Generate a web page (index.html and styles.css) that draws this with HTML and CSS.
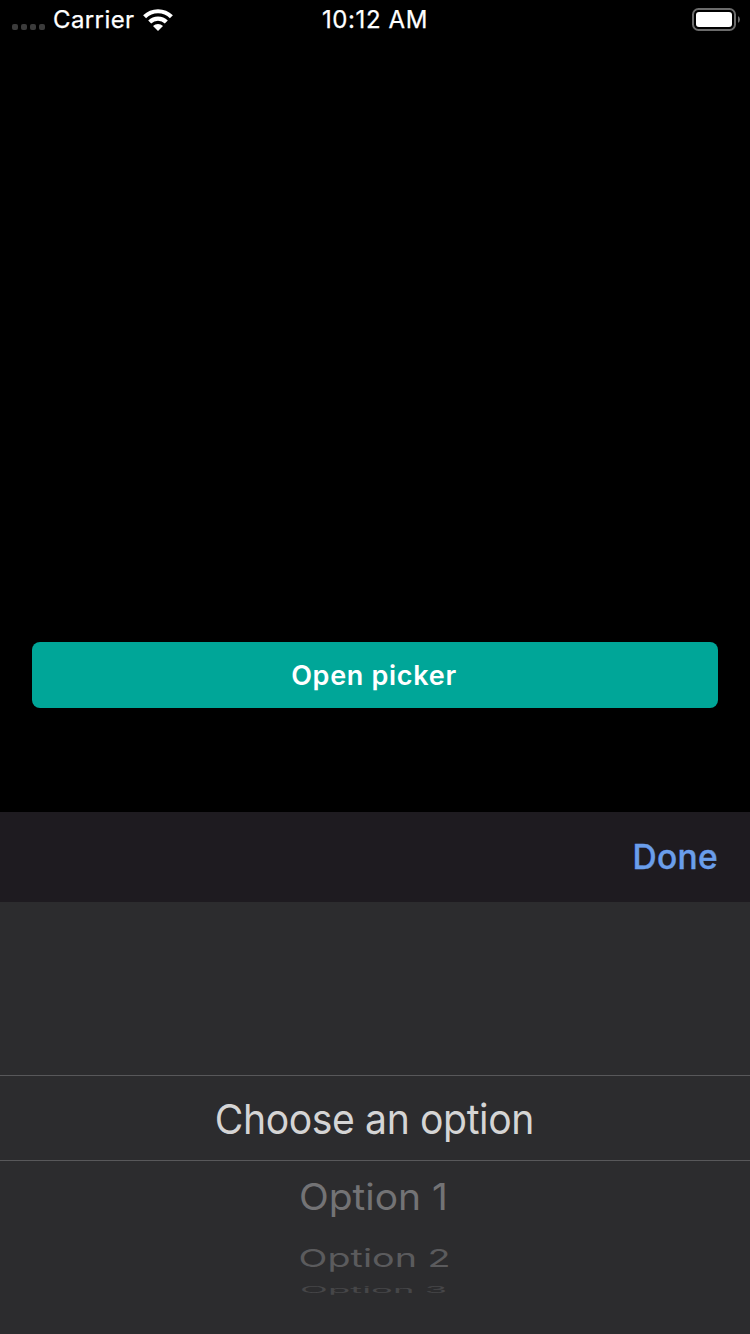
FILE: index.html
```html
<!DOCTYPE html>
<html lang="en">
<head>
<meta charset="utf-8">
<title>Picker</title>
<link rel="stylesheet" href="styles.css">
</head>
<body>
<div class="screen">
  <header class="status">
    <div class="status-left">
      <div class="signal"><i></i><i></i><i></i><i></i></div>
      <span class="carrier">Carrier</span>
      <svg class="wifi" width="30" height="22" viewBox="0 0 30 22">
        <path fill="none" stroke="#fff" stroke-width="4.2" d="M1.6 7.8A19 19 0 0 1 28.4 7.8M6.7 13A11.7 11.7 0 0 1 23.3 13"/>
        <path fill="#fff" d="M10 17.1A7.2 7.2 0 0 1 20 17.1L15 22Z"/>
      </svg>
    </div>
    <span class="time">10:12 AM</span>
    <div class="status-right">
      <svg width="48" height="24" viewBox="0 0 48 24">
        <rect x="1" y="1" width="42" height="21" rx="5.5" fill="none" stroke="#6b6b6b" stroke-width="2"/>
        <rect x="4" y="4" width="36" height="15" rx="3" fill="#fff"/>
        <path d="M46 8Q48 9.3 48 11.5T46 15Z" fill="#6b6b6b"/>
      </svg>
    </div>
  </header>
  <main class="content"><button class="open"><span>Open picker</span></button></main>
  <div class="toolbar"><span class="done">Done</span></div>
  <section class="wheel">
    <div class="selected"><span class="choose">Choose an option</span></div>
    <div class="row row-1"><span>Option 1</span></div>
    <div class="row row-2"><span>Option 2</span></div>
    <div class="row row-3"><span>Option 3</span></div>
  </section>
</div>
</body>
</html>
```
FILE: styles.css
```css
* { box-sizing: border-box; }
body { margin: 0; background: #000; font-family: Inter, "Liberation Sans", sans-serif; color: #fff; }
.screen { width: 750px; height: 1334px; display: flex; flex-direction: column; overflow: hidden; }
.status { height: 40px; display: grid; grid-template-columns: 1fr auto 1fr; font-size: 24px; line-height: 40px; font-weight: 400; }
.status-left { display: flex; padding-left: 12px; }
.signal { display: flex; gap: 3px; padding-top: 24px; margin-right: 8px; }
.signal i { width: 6px; height: 6px; border-radius: 2px; background: #3b3b3b; }
.carrier { width: 89.5px; letter-spacing: 0.4px; -webkit-text-stroke: 0.25px #fff; }
.time { letter-spacing: 0.6px; -webkit-text-stroke: 0.25px #fff; }
.wifi { margin-top: 9px; }
.status-right { display: flex; justify-content: flex-end; padding: 8px 10px 0 0; }
.content { height: 772px; padding: 602px 32px 0; }
.open { display: block; width: 100%; height: 66px; padding: 1px 2px 0 0; border: 0; border-radius: 8px; background: #00a698; color: #fff; font: 600 27px/65px Inter, "Liberation Sans", sans-serif; letter-spacing: 0.7px; }
.toolbar { height: 90px; display: flex; justify-content: flex-end; padding-right: 32px; background: #1e1b20; color: #6a9eeb; font-size: 33.5px; line-height: 91px; font-weight: 500; }
.done { letter-spacing: 0.3px; -webkit-text-stroke: 0.4px #6a9eeb; }
.wheel { height: 432px; padding-top: 173px; background: #2c2c2e; text-align: center; }
.selected { height: 86px; padding-right: 2px; border-top: 1px solid #58585a; border-bottom: 1px solid #58585a; font-size: 41px; line-height: 86px; letter-spacing: -0.4px; color: #d5d5d5; }
.choose { display: inline-block; transform: scaleX(0.954); }
.row span { display: inline-block; }
.row { font-size: 41px; }
.row-1 { height: 74px; line-height: 72px; padding-right: 4px; color: #737375; }
.row-1 span { transform: scale(0.95, 0.9); }
.row-2 { height: 46px; line-height: 46px; color: #5b5b5d; }
.row-2 span { transform: scale(0.92, 0.6); }
.row-3 { height: 20px; line-height: 18px; padding-right: 2px; color: #464648; }
.row-3 span { transform: scale(0.89, 0.22); }
```
